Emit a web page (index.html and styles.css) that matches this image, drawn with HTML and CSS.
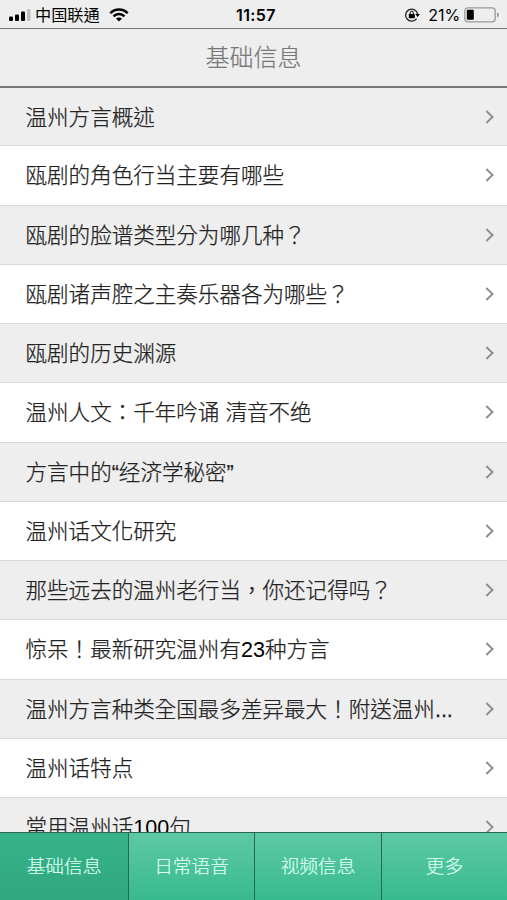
FILE: index.html
```html
<!DOCTYPE html>
<html lang="zh-Hant">
<head>
    <meta charset="UTF-8">
    <meta name="viewport" content="width=device-width, initial-scale=1.0">
    <title>基础信息</title>
    <link rel="stylesheet" href="styles.css">
</head>
<body>
    <div class="status-bar">
        <div class="status-left">
            <svg class="signal" width="22" height="12" viewBox="0 0 22 12">
                <rect x="0" y="7.5" width="4" height="4.5" rx="1.2"/>
                <rect x="6" y="5.5" width="4" height="6.5" rx="1"/>
                <rect x="12" y="2.5" width="4" height="9.5" rx="1"/>
                <rect x="18" y="0" width="3.5" height="12" rx="1" fill="#bdbdbd"/>
            </svg>
            <span class="carrier">中国联通</span>
            <svg class="wifi" width="20" height="14" viewBox="0 0 20 14">
                <g fill="none" stroke="#000" stroke-width="2.4">
                    <path d="M1.3 5.2C6 .2 14 .2 18.7 5.2"/>
                    <path d="M4.5 8.4C7.6 5.2 12.4 5.2 15.5 8.4"/>
                </g>
                <path d="M10 13.4L6.9 10.5C8.7 9 11.3 9 13.1 10.5Z"/>
            </svg>
        </div>
        <span class="time">11:57</span>
        <div class="status-right">
            <svg class="lock" width="16" height="14" viewBox="0 0 16 14">
                <path d="M12.6 10.6A6 6 0 1 1 13.6 6.2" fill="none" stroke="#222" stroke-width="1.3"/>
                <path d="M11.3 6H16L13.6 9.1Z"/>
                <rect x="4.8" y="6" width="6" height="4.2" rx=".4"/>
                <path d="M6.2 6.5V4.8a1.6 1.6 0 0 1 3.2 0V6.5" fill="none" stroke="#000"/>
            </svg>
            <span class="percent">21%</span>
            <svg class="battery" width="36" height="16" viewBox="0 0 36 16">
                <rect x=".8" y=".8" width="30.4" height="14" rx="3" fill="none" stroke="#999" stroke-width="1.3"/>
                <rect x="2.8" y="2.8" width="7" height="10" rx="1"/>
                <path d="M33 5.3C35.4 6 35.4 9.8 33 10.5Z" fill="#999"/>
            </svg>
        </div>
    </div>

    <header class="header">
        <h1>基础信息</h1>
    </header>

    <ul class="list">
        <li><a href="#">温州方言概述</a></li>
        <li><a href="#">瓯剧的角色行当主要有哪些</a></li>
        <li><a href="#">瓯剧的脸谱类型分为哪几种？</a></li>
        <li><a href="#">瓯剧诸声腔之主奏乐器各为哪些？</a></li>
        <li><a href="#">瓯剧的历史渊源</a></li>
        <li><a href="#">温州人文：千年吟诵 清音不绝</a></li>
        <li><a href="#">方言中的“经济学秘密”</a></li>
        <li><a href="#">温州话文化研究</a></li>
        <li><a href="#">那些远去的温州老行当，你还记得吗？</a></li>
        <li><a href="#">惊呆！最新研究温州有<span class="num">23</span>种方言</a></li>
        <li><a href="#">温州方言种类全国最多差异最大！附送温州...</a></li>
        <li><a href="#">温州话特点</a></li>
        <li><a href="#">常用温州话<span class="num">100</span>句</a></li>
    </ul>

    <nav class="tabs">
        <a class="active" href="#">基础信息</a>
        <a href="#">日常语音</a>
        <a href="#">视频信息</a>
        <a href="#">更多</a>
    </nav>
</body>
</html>
```
FILE: styles.css
```css
* {
    box-sizing: border-box;
}
body {
    margin: 0;
    height: 900px;
    display: flex;
    flex-direction: column;
    overflow: hidden;
    background: #eee;
    font-family: "Liberation Sans", "Noto Sans CJK TC", sans-serif;
}
a {
    color: inherit;
    text-decoration: none;
}
.status-bar {
    flex: none;
    display: grid;
    grid-template-columns: 1fr auto 1fr;
    align-items: center;
    height: 29px;
    padding: 1px 7px 0 9px;
    border-bottom: 1px solid #777;
}
.status-left,
.status-right {
    display: flex;
    align-items: center;
}
.status-right {
    justify-content: flex-end;
}
.battery {
    margin-top: -1px;
}
.carrier {
    margin: 0 9px 0 4px;
    font-size: 16.2px;
    line-height: 28px;
}
.time {
    margin-left: 3px;
    font-family: Inter, sans-serif;
    font-size: 16px;
    font-weight: 600;
    letter-spacing: 0.4px;
}
.percent {
    margin: 0 4px 0 8px;
    font-family: Inter, sans-serif;
    font-size: 16px;
    letter-spacing: -0.1px;
}
.header {
    flex: none;
    height: 59px;
    border-bottom: 2px solid #777;
    text-align: center;
}
.header h1 {
    margin: 0;
    font-size: 24px;
    font-weight: 300;
    line-height: 58px;
    color: #777;
    -webkit-text-stroke: 0.2px;
}
.list {
    flex: 1;
    min-height: 0;
    margin: 0;
    padding: 0;
    overflow: hidden;
    list-style: none;
}
.list li {
    display: flex;
    align-items: center;
    height: 59.25px;
    padding: 0 15px 0 25.5px;
    border-bottom: 1px solid #d8d8d8;
    background: #fff;
}
.list li:nth-child(odd) {
    background: #eee;
}
.list li:first-child {
    height: 58.25px;
}
.list li::after {
    content: "";
    width: 8px;
    height: 8px;
    margin-left: auto;
    border: solid #8c8c8c;
    border-width: 2px 2px 0 0;
    transform: scale(0.95) rotate(45deg);
}
.list a {
    padding-top: 2px;
    font-size: 21.55px;
    font-weight: 300;
    line-height: 32px;
    color: #222;
    white-space: nowrap;
    -webkit-text-stroke: 0.25px;
}
.num {
    color: #000;
    -webkit-text-stroke: 0;
}
.tabs {
    flex: none;
    display: grid;
    grid-template-columns: 129px 126px 127px 125px;
    height: 68px;
    border-top: 1px solid #29684f;
    border-bottom: 1px solid #1c5a43;
}
.tabs a {
    border-right: 1px solid #29684f;
    background: linear-gradient(#5ec9a5, #38ba8e);
    color: #dcfff2;
    font-size: 18.7px;
    font-weight: 300;
    line-height: 67px;
    text-align: center;
    -webkit-text-stroke: 0.2px;
}
.tabs a.active {
    background: linear-gradient(#37b389, #30a780);
}
.tabs a:last-child {
    border-right: 0;
}
```
